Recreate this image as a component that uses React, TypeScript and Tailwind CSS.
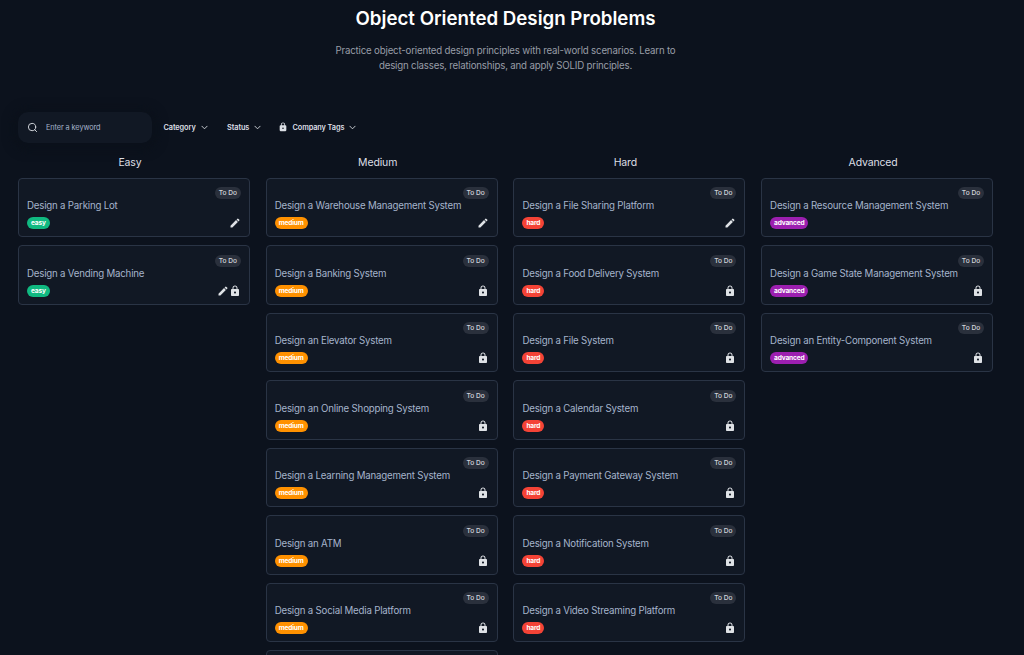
import { FiSearch } from 'react-icons/fi'
import { MdEdit, MdLock } from 'react-icons/md'

type Level = 'easy' | 'medium' | 'hard' | 'advanced'

interface Problem {
  title: string
  editable?: boolean
  locked?: boolean
}

interface Column {
  name: string
  level: Level
  problems: Problem[]
  hasMore?: boolean
}

const columns: Column[] = [
  {
    name: 'Easy',
    level: 'easy',
    problems: [
      { title: 'Design a Parking Lot', editable: true },
      { title: 'Design a Vending Machine', editable: true, locked: true },
    ],
  },
  {
    name: 'Medium',
    level: 'medium',
    hasMore: true,
    problems: [
      { title: 'Design a Warehouse Management System', editable: true },
      { title: 'Design a Banking System', locked: true },
      { title: 'Design an Elevator System', locked: true },
      { title: 'Design an Online Shopping System', locked: true },
      { title: 'Design a Learning Management System', locked: true },
      { title: 'Design an ATM', locked: true },
      { title: 'Design a Social Media Platform', locked: true },
    ],
  },
  {
    name: 'Hard',
    level: 'hard',
    problems: [
      { title: 'Design a File Sharing Platform', editable: true },
      { title: 'Design a Food Delivery System', locked: true },
      { title: 'Design a File System', locked: true },
      { title: 'Design a Calendar System', locked: true },
      { title: 'Design a Payment Gateway System', locked: true },
      { title: 'Design a Notification System', locked: true },
      { title: 'Design a Video Streaming Platform', locked: true },
    ],
  },
  {
    name: 'Advanced',
    level: 'advanced',
    problems: [
      { title: 'Design a Resource Management System' },
      { title: 'Design a Game State Management System', locked: true },
      { title: 'Design an Entity-Component System', locked: true },
    ],
  },
]

const levelColors: Record<Level, string> = {
  easy: 'bg-[#10b981]',
  medium: 'bg-[#ff9100]',
  hard: 'bg-[#f44336]',
  advanced: 'bg-[#9c1fb0]',
}

function Chevron() {
  return (
    <svg viewBox="0 0 8 5" className="w-[7px] h-[5px]" fill="none" stroke="currentColor" strokeLinecap="round" strokeLinejoin="round">
      <path d="M1 1l3 3 3-3" />
    </svg>
  )
}

function Filter({ label, locked, className }: { label: string; locked?: boolean; className?: string }) {
  return (
    <button className={`flex items-center text-[7.35px] font-semibold tracking-[-0.1px] text-[#dcdfe5] ${className ?? ''}`}>
      {locked && <MdLock className="size-[10px] mr-[4px]" />}
      <span className="mr-[5px]">{label}</span>
      <Chevron />
    </button>
  )
}

function ProblemCard({ problem, level }: { problem: Problem; level: Level }) {
  return (
    <div className="h-[59.5px] shrink-0 rounded-[4px] border border-[#2a3445] bg-[#111824] px-[8px] pt-[8.2px]">
      <div className="flex justify-end">
        <span className="h-[12px] w-[26px] rounded-full bg-[#2a303c] text-center text-[6.6px] leading-[12.5px] font-medium text-[#d3d6dc]">
          To Do
        </span>
      </div>
      <h3 className="h-[14px] whitespace-nowrap text-[9.7px] leading-[14px] tracking-[-0.2px] text-[#a5b4cb]">{problem.title}</h3>
      <div className="mt-[4px] flex h-[12px] items-center justify-between">
        <span className={`h-[12px] rounded-full px-[4px] text-[6.6px] leading-[12px] font-bold tracking-[-0.2px] text-white ${levelColors[level]}`}>
          {level}
        </span>
        <div className="flex text-[#dfe2e6]">
          {problem.editable && <MdEdit className="size-[12px]" />}
          {problem.locked && <MdLock className="size-[12px]" />}
        </div>
      </div>
    </div>
  )
}

export default function App() {
  return (
    <main className="h-[655px] overflow-hidden bg-[#0c121d] pl-[18px] pr-[31px] font-['Inter',sans-serif]">
      <header className="flex h-[112px] flex-col items-center pt-[7px] text-center">
        <h1 className="whitespace-nowrap text-[18.7px] leading-[24px] font-semibold text-white">
          Object Oriented Design Problems
        </h1>
        <p className="mt-[13px] whitespace-nowrap text-[9.7px] leading-[14.5px] tracking-[-0.18px] text-[#989da7]">
          Practice object-oriented design principles with real-world scenarios. Learn to
          <br />
          design classes, relationships, and apply SOLID principles.
        </p>
      </header>

      <div className="flex h-[31px] items-center">
        <label className="flex h-[31px] w-[134px] items-center rounded-[10px] bg-[#111824] pl-[9px] shadow-[0_2px_8px_7px_#0b111b]">
          <FiSearch className="size-[11px] text-[#dcdfe5]" />
          <input
            className="ml-[8px] w-[95px] bg-transparent text-[7.35px] tracking-[-0.1px] outline-none placeholder:text-[#a5b4cb]"
            placeholder="Enter a keyword"
          />
        </label>
        <Filter label="Category" className="ml-[11.5px]" />
        <Filter label="Status" className="ml-[19.5px]" />
        <Filter label="Company Tags" locked className="ml-[17.2px]" />
      </div>

      <div className="mt-[12.9px] grid grid-cols-4 gap-x-[15.8px]">
        {columns.map((column) => (
          <section key={column.level} className="min-w-0">
            <h2 className="mb-[8px] h-[14px] pr-[8px] text-center text-[10.5px] leading-[14px] tracking-[-0.15px] text-[#dcdfe5]">
              {column.name}
            </h2>
            <div className="flex flex-col gap-[8px]">
              {column.problems.map((problem) => (
                <ProblemCard key={problem.title} problem={problem} level={column.level} />
              ))}
              {column.hasMore && <div className="h-[59.5px] rounded-[4px] border border-[#2a3445] bg-[#111824]" />}
            </div>
          </section>
        ))}
      </div>
    </main>
  )
}
